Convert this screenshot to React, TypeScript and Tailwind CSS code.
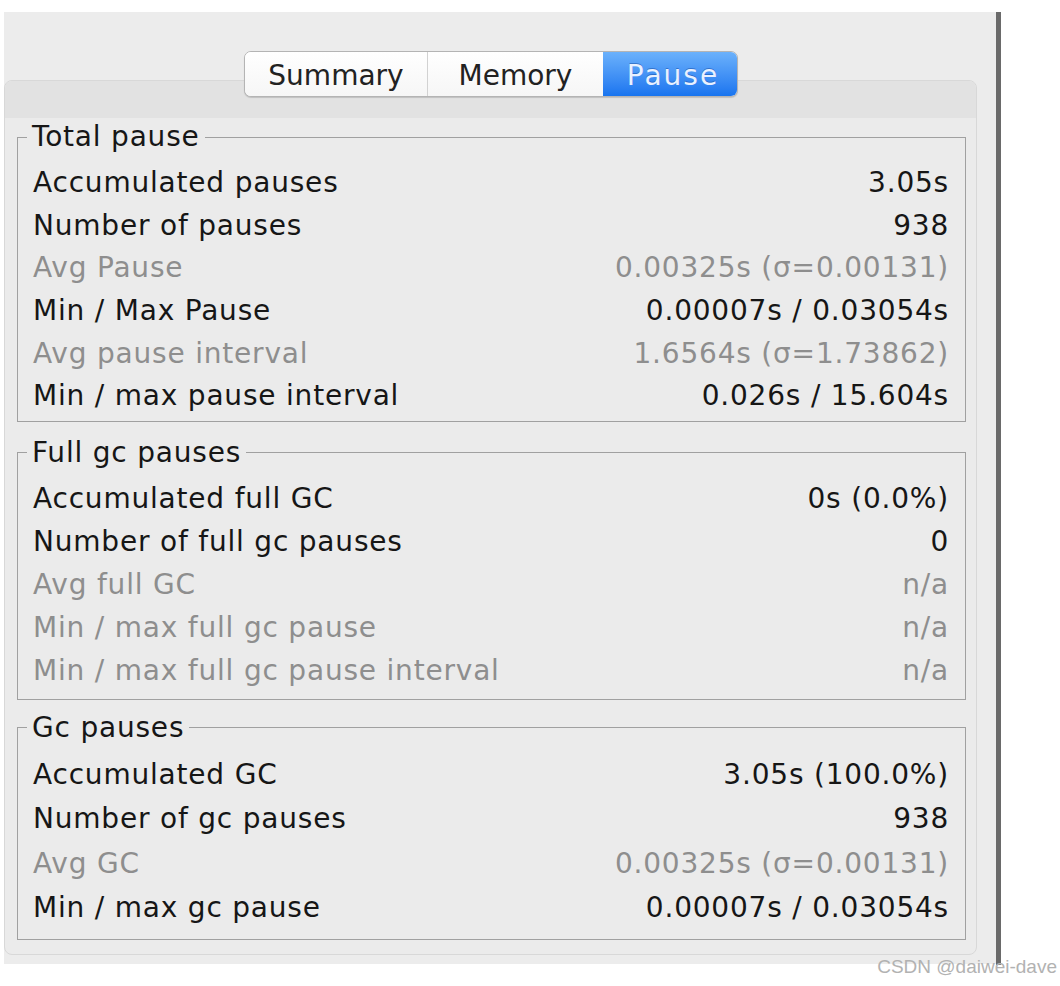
import React from 'react'

type Row = { label: string; value: string; dim?: boolean }

const totalPause: Row[] = [
  { label: 'Accumulated pauses', value: '3.05s' },
  { label: 'Number of pauses', value: '938' },
  { label: 'Avg Pause', value: '0.00325s (σ=0.00131)', dim: true },
  { label: 'Min / Max Pause', value: '0.00007s / 0.03054s' },
  { label: 'Avg pause interval', value: '1.6564s (σ=1.73862)', dim: true },
  { label: 'Min / max pause interval', value: '0.026s / 15.604s' },
]

const fullGc: Row[] = [
  { label: 'Accumulated full GC', value: '0s (0.0%)' },
  { label: 'Number of full gc pauses', value: '0' },
  { label: 'Avg full GC', value: 'n/a', dim: true },
  { label: 'Min / max full gc pause', value: 'n/a', dim: true },
  { label: 'Min / max full gc pause interval', value: 'n/a', dim: true },
]

const gcPauses: Row[] = [
  { label: 'Accumulated GC', value: '3.05s (100.0%)' },
  { label: 'Number of gc pauses', value: '938' },
  { label: 'Avg GC', value: '0.00325s (σ=0.00131)', dim: true },
  { label: 'Min / max gc pause', value: '0.00007s / 0.03054s' },
]

// rowH / pad are per group, the panes aren't evenly spaced in the source
const Group = ({
  title,
  rows,
  rowClass,
  className = '',
}: {
  title: string
  rows: Row[]
  rowClass: string
  className?: string
}) => (
  <fieldset className={`border border-[#a0a0a0] pl-[15px] pr-[16px] ${className}`}>
    <legend className="ml-[-6px] px-[5px] leading-[34px] text-[#161616]">{title}</legend>
    <div className="mt-[8px]">
      {rows.map((r) => (
        <div
          key={r.label}
          className={`${rowClass} flex items-center justify-between ${r.dim ? 'text-[#8e8e8e]' : 'text-[#161616]'}`}
        >
          <span>{r.label}</span>
          <span>{r.value}</span>
        </div>
      ))}
    </div>
  </fieldset>
)

export default function App() {
  return (
    <div
      className="w-[1060px] h-[986px] bg-white relative overflow-hidden"
      style={{ fontFamily: '"DejaVu Sans", sans-serif' }}
    >
      <div className="pt-[12px] pl-[4px] flex">
        {/* window area */}
        <div className="w-[992px] h-[952px] bg-[#ececec] pt-[39px]">
          {/* segmented tabs */}
          <div className="flex justify-center pr-[18px] relative z-10">
            <div className="flex h-[46px] rounded-[7px] border border-[#b4b4b4] bg-white shadow-[0_1px_1px_rgba(0,0,0,0.15)] text-[28px] leading-none overflow-hidden">
              <div className="w-[183px] pt-[3px] flex items-center justify-center text-[#222] border-r border-[#d2d2d2] bg-gradient-to-b from-white to-[#f6f6f6]">
                Summary
              </div>
              <div className="w-[175px] pt-[3px] flex items-center justify-center text-[#222] bg-gradient-to-b from-white to-[#f6f6f6]">
                Memory
              </div>
              <div className="w-[134px] pt-[3px] pl-[6px] flex items-center justify-center text-[#e9f1ff] tracking-[2px] bg-gradient-to-b from-[#6bb1fb] to-[#1874ef] [text-shadow:0_-1px_0_rgba(0,40,120,0.35)]">
                Pause
              </div>
            </div>
          </div>

          {/* tab pane */}
          <div className="-mt-[17px] w-[973px] rounded-[8px] border border-[#d8d8d8] bg-[#ebebeb] overflow-hidden text-[28px] tracking-[0.8px]">
            <div className="h-[37px] bg-[#e2e2e2]" />
            <div className="pl-[12px] pr-[10px] pt-[2px] pb-[14px]">
              <Group title="Total pause" rows={totalPause} rowClass="h-[42.6px]" className="pb-[3px]" />
              <Group title="Full gc pauses" rows={fullGc} rowClass="h-[43px]" className="mt-[14px] pb-[6px]" />
              <Group title="Gc pauses" rows={gcPauses} rowClass="h-[44.5px]" className="mt-[11px] pb-[8px]" />
            </div>
          </div>
        </div>
        <div className="w-[5px] h-[953px] bg-[#6a6a6a]" />
      </div>

      <div
        className="absolute right-[3px] bottom-[5px] text-[19px] text-[#b2b2b2]"
        style={{ fontFamily: '"Liberation Sans", Arial, sans-serif' }}
      >
        CSDN @daiwei-dave
      </div>
    </div>
  )
}
